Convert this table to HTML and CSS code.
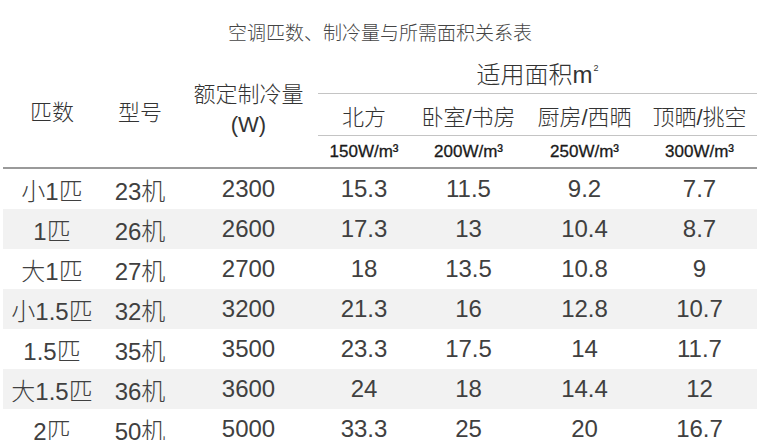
FILE: index.html
```html
<!DOCTYPE html>
<html lang="zh">
<head>
<meta charset="utf-8">
<title>空调匹数、制冷量与所需面积关系表</title>
<link rel="stylesheet" href="styles.css">
</head>
<body>
<div class="sheet">
  <div class="title">空调匹数、制冷量与所需面积关系表</div>
  <table class="ac">
    <colgroup>
      <col class="c1"><col class="c2"><col class="c3"><col class="c4"><col class="c5"><col class="c6"><col class="c7">
    </colgroup>
    <thead>
      <tr class="h1">
        <th rowspan="3" class="side">匹数</th>
        <th rowspan="3" class="side">型号</th>
        <th rowspan="3" class="side cap"><span class="cap-l1">额定制冷量</span><span class="cap-l2">(W)</span></th>
        <th colspan="4" class="area">适用面积m<sup>2</sup></th>
      </tr>
      <tr class="h2">
        <th>北方</th><th>卧室/书房</th><th>厨房/西晒</th><th>顶晒/挑空</th>
      </tr>
      <tr class="h3">
        <th>150W/m³</th><th>200W/m³</th><th>250W/m³</th><th>300W/m³</th>
      </tr>
    </thead>
    <tbody>
      <tr><td>小1匹</td><td>23机</td><td>2300</td><td>15.3</td><td>11.5</td><td>9.2</td><td>7.7</td></tr>
      <tr><td>1匹</td><td>26机</td><td>2600</td><td>17.3</td><td>13</td><td>10.4</td><td>8.7</td></tr>
      <tr><td>大1匹</td><td>27机</td><td>2700</td><td>18</td><td>13.5</td><td>10.8</td><td>9</td></tr>
      <tr><td>小1.5匹</td><td>32机</td><td>3200</td><td>21.3</td><td>16</td><td>12.8</td><td>10.7</td></tr>
      <tr><td>1.5匹</td><td>35机</td><td>3500</td><td>23.3</td><td>17.5</td><td>14</td><td>11.7</td></tr>
      <tr><td>大1.5匹</td><td>36机</td><td>3600</td><td>24</td><td>18</td><td>14.4</td><td>12</td></tr>
      <tr><td>2匹</td><td>50机</td><td>5000</td><td>33.3</td><td>25</td><td>20</td><td>16.7</td></tr>
    </tbody>
  </table>
</div>
</body>
</html>
```
FILE: styles.css
```css
html, body {
  margin: 0;
  padding: 0;
  background: #ffffff;
}
body {
  width: 780px;
  height: 440px;
  overflow: hidden;
  font-family: "Liberation Sans", "Noto Sans CJK SC", sans-serif;
  color: #3a3a3a;
}
.sheet {
  padding-left: 3px;
  width: 754px;
}
.title {
  padding-top: 20px;
  height: 24px;
  line-height: 24px;
  margin-bottom: 8px;
  text-align: center;
  font-family: "Noto Sans CJK SC", sans-serif;
  font-size: 19px;
  font-weight: 300;
  color: #444;
}
.ac {
  width: 754px;
  border-collapse: collapse;
  table-layout: fixed;
}
.c1 { width: 98px; }
.c2 { width: 78px; }
.c3 { width: 139px; }
.c4 { width: 92px; }
.c5 { width: 117px; }
.c6 { width: 115px; }
.c7 { width: 115px; }
.ac th, .ac td {
  padding: 0;
  text-align: center;
  vertical-align: middle;
  font-weight: normal;
  white-space: nowrap;
}
.ac th {
  font-family: "Liberation Sans", "Noto Sans CJK SC", sans-serif;
  font-weight: 300;
  color: #333;
}
.side {
  font-size: 22px;
  border-bottom: 2px solid #9a9a9a;
}
.cap-l1, .cap-l2 {
  display: block;
  line-height: 30px;
}
.h1 th.area {
  height: 41px;
  font-size: 24px;
}
.area sup {
  font-size: 9px;
  vertical-align: 12px;
  margin-left: 1px;
}
.h2 th {
  height: 41px;
  font-size: 22px;
  border-top: 1px solid #c4c4c4;
}
.h3 th {
  height: 31px;
  font-size: 17px;
  font-weight: normal;
  color: #1a1a1a;
  -webkit-text-stroke: 0.3px #1a1a1a;
  border-top: 1px solid #c4c4c4;
  border-bottom: 2px solid #9a9a9a;
}
.ac tbody td {
  height: 40px;
  font-size: 24px;
  font-weight: 300;
  color: #404040;
}
.ac tbody tr:nth-child(even) td {
  background: #f2f2f2;
}
```
